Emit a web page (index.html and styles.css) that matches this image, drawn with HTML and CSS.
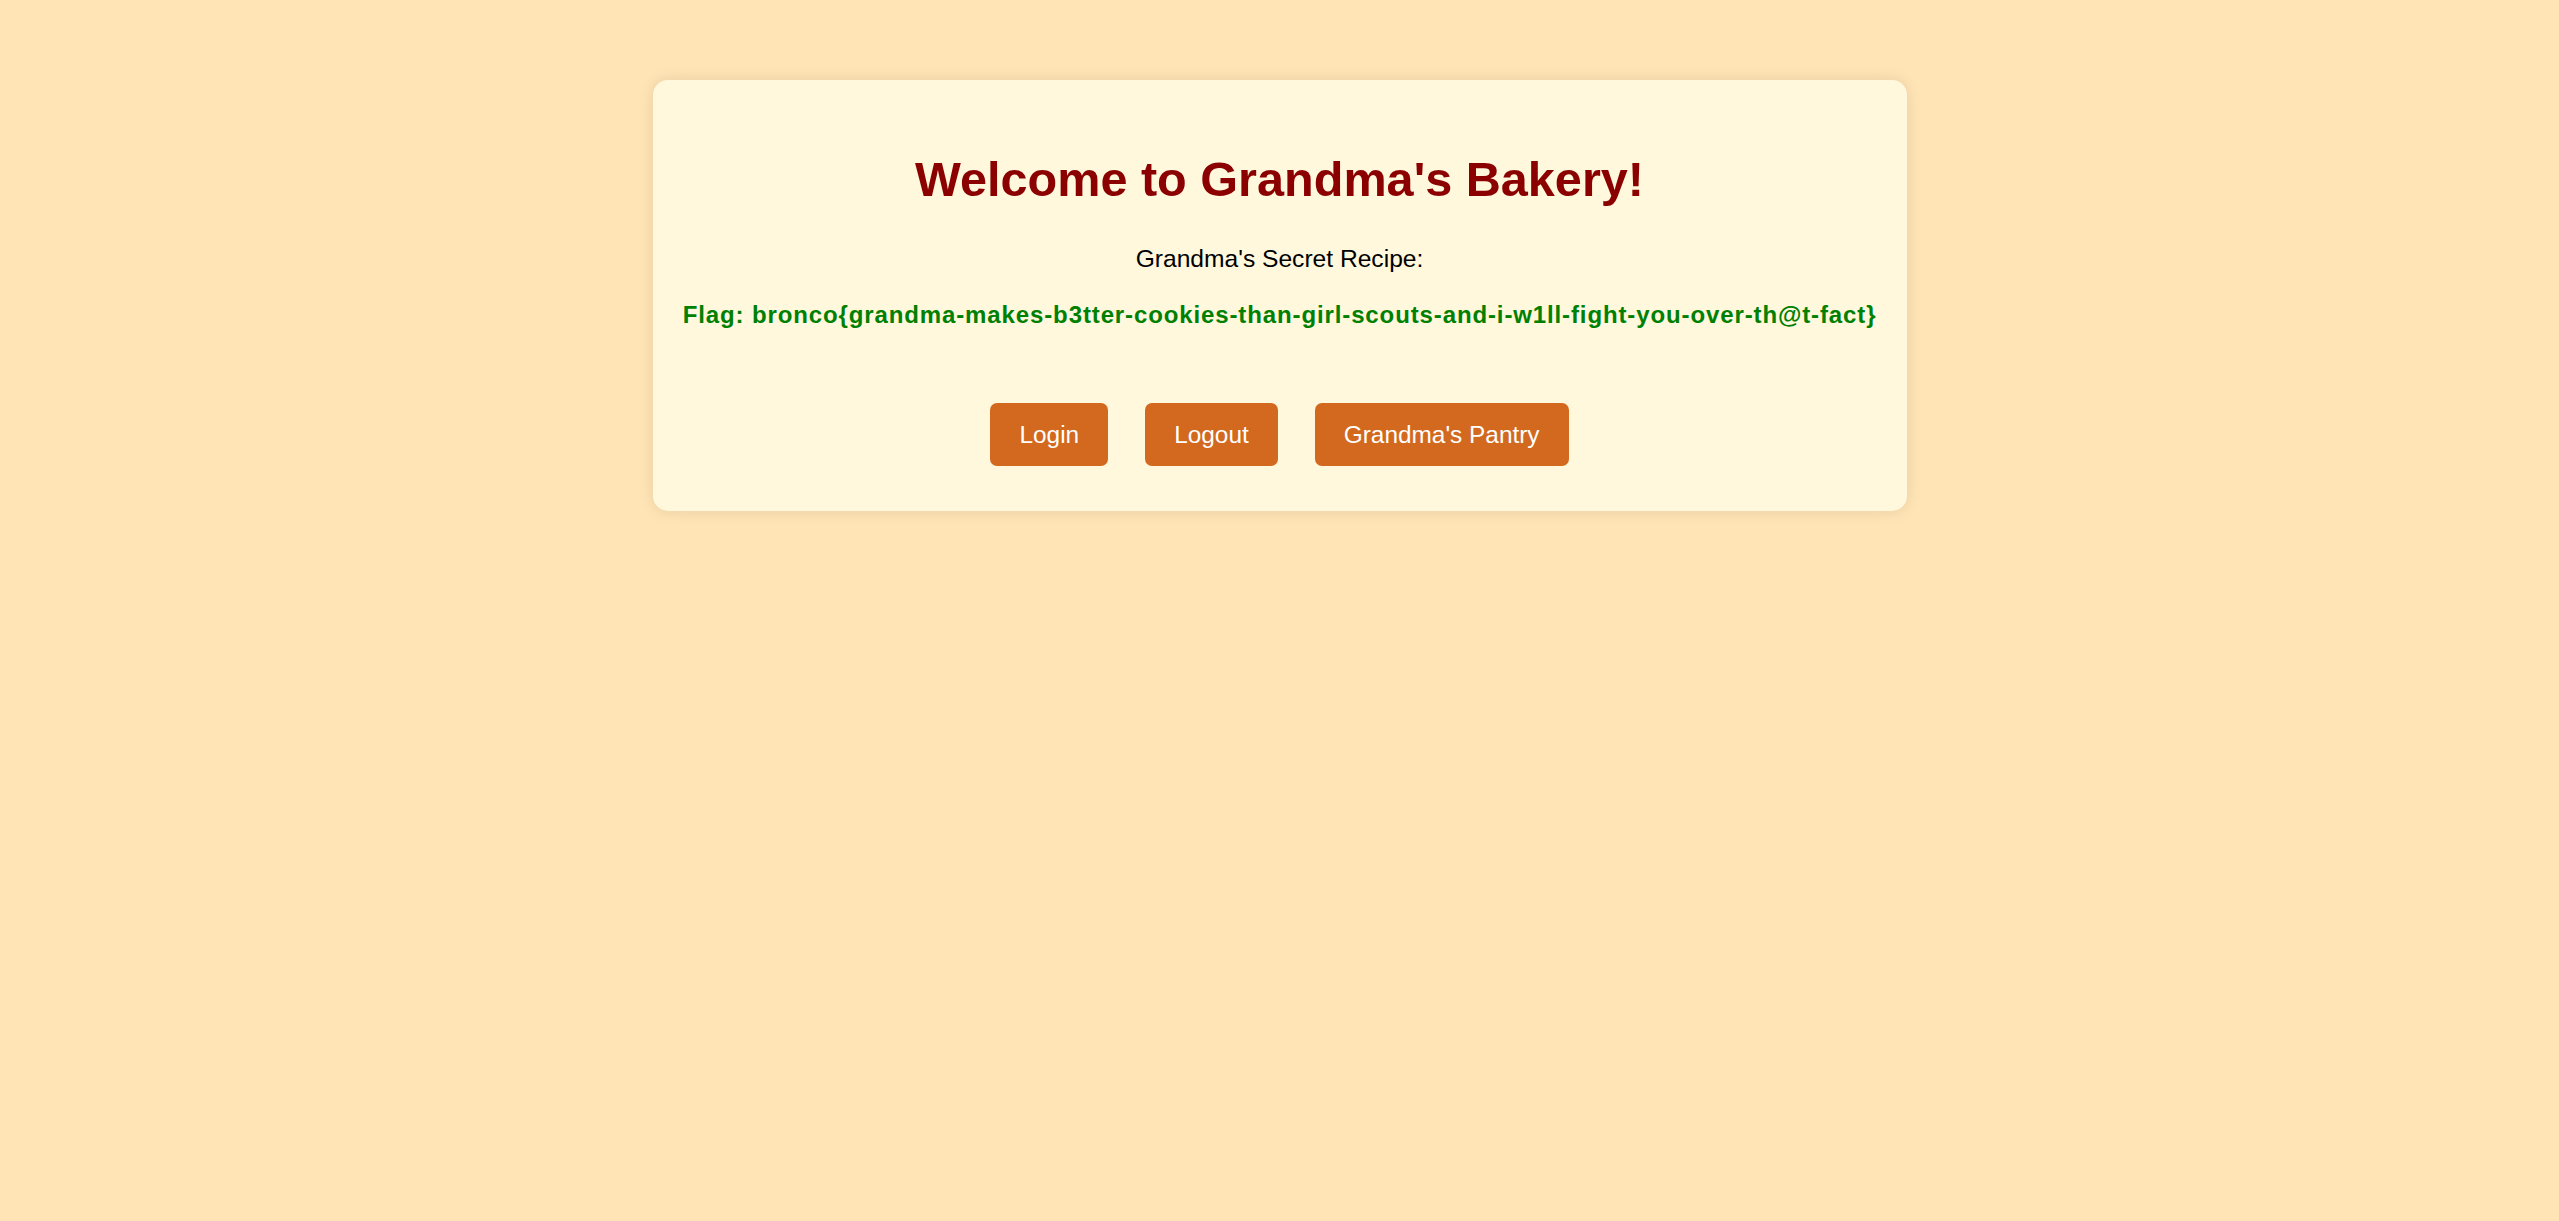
FILE: index.html
```html
<!DOCTYPE html>
<html lang="en">
<head>
<meta charset="utf-8">
<title>Grandma's Bakery</title>
<link rel="stylesheet" href="styles.css">
</head>
<body>
  <main class="card">
    <h1 class="title">Welcome to Grandma's Bakery!</h1>
    <p class="recipe">Grandma's Secret Recipe:</p>
    <p class="flag">Flag: bronco{grandma-makes-b3tter-cookies-than-girl-scouts-and-i-w1ll-fight-you-over-th@t-fact}</p>
    <nav class="actions">
      <a class="btn" href="#">Login</a>
      <a class="btn" href="#">Logout</a>
      <a class="btn" href="#">Grandma's Pantry</a>
    </nav>
  </main>
</body>
</html>
```

FILE: styles.css
```css
html, body {
  margin: 0;
  padding: 0;
}

body {
  background: #FFE4B5;
  font-family: "Liberation Sans", Arial, sans-serif;
  color: #000;
  min-height: 1221px;
}

.card {
  box-sizing: border-box;
  width: 1254px;
  margin: 80px auto 0;
  padding: 66px 20px 45px;
  background: #FFF8DC;
  border-radius: 15px;
  box-shadow: 0 0 15px rgba(0, 0, 0, 0.1);
  text-align: center;
}

.title {
  margin: 0;
  font-size: 48.6px;
  line-height: 67px;
  font-weight: bold;
  color: #8B0000;
}

.recipe {
  margin: 29px 0 0;
  font-size: 24.6px;
  line-height: 33px;
}

.flag {
  margin: 23px 0 0;
  font-size: 24px;
  line-height: 33px;
  font-weight: bold;
  letter-spacing: 0.88px;
  color: #008000;
}

.actions {
  display: flex;
  justify-content: center;
  gap: 37px;
  margin-top: 72px;
}

.btn {
  display: block;
  padding: 15px 29px;
  font-size: 24.4px;
  line-height: 33px;
  color: #fff;
  background: #D2691E;
  border-radius: 7px;
  text-decoration: none;
}
```
